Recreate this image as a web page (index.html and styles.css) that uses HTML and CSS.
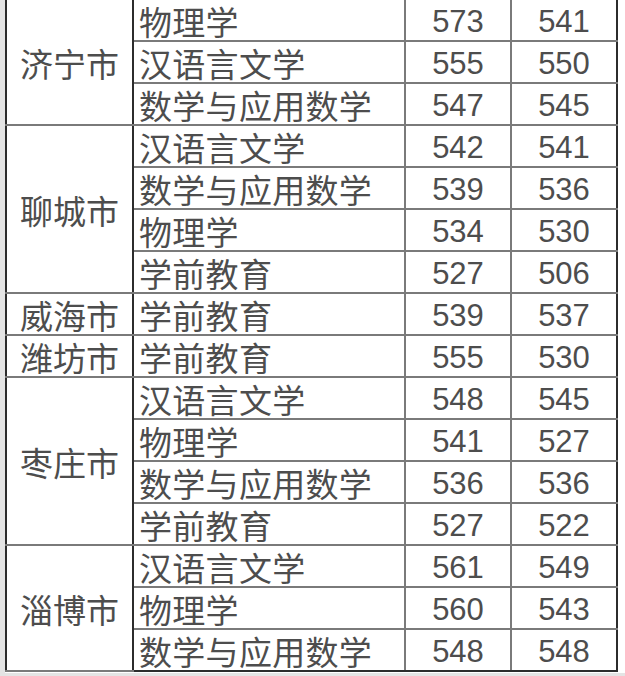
FILE: index.html
```html
<!DOCTYPE html>
<html lang="zh-CN">
<head>
<meta charset="utf-8">
<title>录取分数</title>
<link rel="stylesheet" href="styles.css">
</head>
<body>
<div class="sheet">
<table class="scores">
<colgroup>
<col class="c-city"><col class="c-major"><col class="c-num"><col class="c-num">
</colgroup>
<tbody class="grp">
<tr><td class="city" rowspan="3">济宁市</td><td class="major">物理学</td><td class="num">573</td><td class="num">541</td></tr>
<tr><td class="major">汉语言文学</td><td class="num">555</td><td class="num">550</td></tr>
<tr><td class="major">数学与应用数学</td><td class="num">547</td><td class="num">545</td></tr>
</tbody>
<tbody class="grp">
<tr><td class="city" rowspan="4">聊城市</td><td class="major">汉语言文学</td><td class="num">542</td><td class="num">541</td></tr>
<tr><td class="major">数学与应用数学</td><td class="num">539</td><td class="num">536</td></tr>
<tr><td class="major">物理学</td><td class="num">534</td><td class="num">530</td></tr>
<tr><td class="major">学前教育</td><td class="num">527</td><td class="num">506</td></tr>
</tbody>
<tbody class="grp">
<tr><td class="city">威海市</td><td class="major">学前教育</td><td class="num">539</td><td class="num">537</td></tr>
</tbody>
<tbody class="grp">
<tr><td class="city">潍坊市</td><td class="major">学前教育</td><td class="num">555</td><td class="num">530</td></tr>
</tbody>
<tbody class="grp">
<tr><td class="city" rowspan="4">枣庄市</td><td class="major">汉语言文学</td><td class="num">548</td><td class="num">545</td></tr>
<tr><td class="major">物理学</td><td class="num">541</td><td class="num">527</td></tr>
<tr><td class="major">数学与应用数学</td><td class="num">536</td><td class="num">536</td></tr>
<tr><td class="major">学前教育</td><td class="num">527</td><td class="num">522</td></tr>
</tbody>
<tbody class="grp">
<tr><td class="city" rowspan="3">淄博市</td><td class="major">汉语言文学</td><td class="num">561</td><td class="num">549</td></tr>
<tr><td class="major">物理学</td><td class="num">560</td><td class="num">543</td></tr>
<tr><td class="major">数学与应用数学</td><td class="num">548</td><td class="num">548</td></tr>
</tbody>
</table>
</div>
</body>
</html>
```
FILE: styles.css
```css
html, body {
  margin: 0;
  padding: 0;
}
body {
  background: #e4e4e4;
  width: 625px;
  height: 676px;
  overflow: hidden;
}
.sheet {
  margin-left: 5px;
  width: 620px;
  height: 673px;
  background: #ffffff;
  overflow: hidden;
}
.scores {
  border-collapse: collapse;
  table-layout: fixed;
  width: 613px;
  margin-top: -2px;
  margin-left: 0;
  font-family: "Noto Sans CJK SC", "Noto Sans", sans-serif;
  color: #4d4d4d;
  border: 2px solid #2c2c2c;
}
.c-city { width: 127px; }
.c-major { width: 272px; }
.c-num { width: 106px; }
.scores tr {
  height: 42px;
}
.scores td {
  padding: 4px 0 0 0;
  border: 2px solid #7a7a7a;
  white-space: nowrap;
  line-height: 35px;
  vertical-align: top;
}
.grp {
  border-top: 2px solid #2c2c2c;
}
.scores td.city {
  border-right: 2px solid #2c2c2c;
  border-left: 2px solid #2c2c2c;
  text-align: center;
  font-size: 33px;
  vertical-align: middle;
  padding-top: 2px;
}
.scores td.major {
  border-left: 2px solid #2c2c2c;
  font-size: 33px;
  letter-spacing: 0.3px;
  padding-left: 5px;
}
.scores td.num {
  text-align: center;
  font-family: "Liberation Sans", "Noto Sans", sans-serif;
  font-size: 31px;
  padding-top: 4px;
  line-height: 35px;
}
.scores tr:first-child td {
  border-top: 2px solid #2c2c2c;
}
.scores td.num:last-child {
  border-right: 2px solid #2c2c2c;
}
.scores tbody:last-child tr:last-child td {
  border-bottom: 2px solid #2c2c2c;
}
```
